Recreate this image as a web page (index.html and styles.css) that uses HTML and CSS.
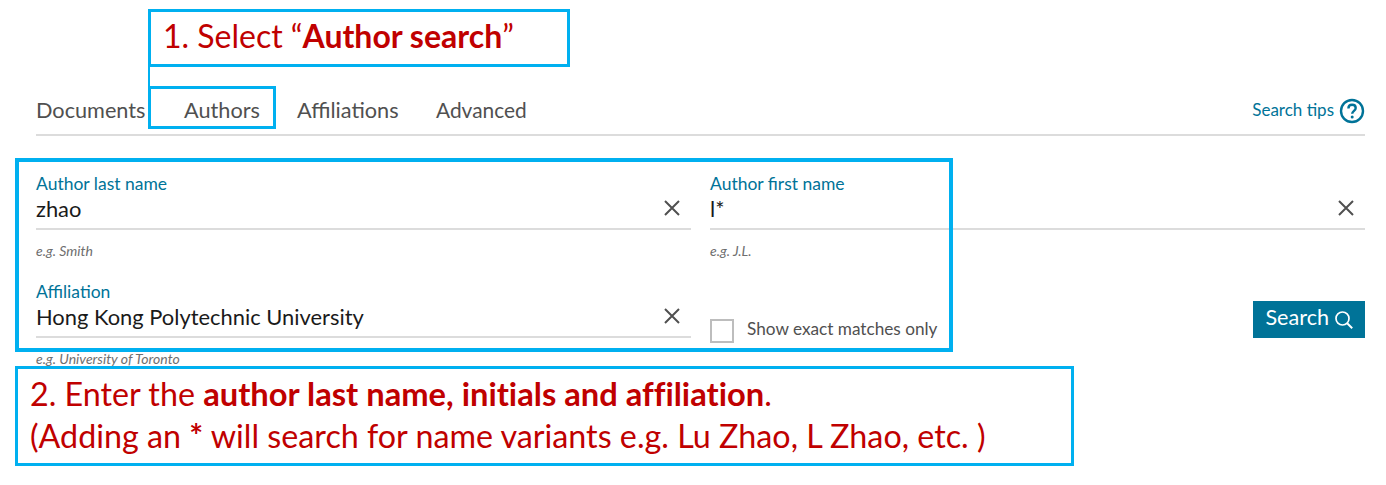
FILE: index.html
```html
<!DOCTYPE html>
<html lang="en">
<head>
  <meta charset="UTF-8" />
  <title>Author search</title>
  <link rel="stylesheet" href="styles.css">
</head>
<body>

<div class="page">
  <div class="tabs">
    <a class="tab tab-documents">Documents</a>
    <a class="tab tab-authors">Authors</a>
    <a class="tab tab-affiliations">Affiliations</a>
    <a class="tab tab-advanced">Advanced</a>
    <a class="tips">Search tips
      <svg class="tips-icon" width="26" height="26" viewBox="0 0 26 26">
        <circle cx="13" cy="13" r="11" fill="none" stroke="#007398" stroke-width="2.4" />
        <path d="M9.4 10.4c0-2.2 1.6-3.6 3.7-3.6s3.6 1.3 3.6 3.2c0 2.8-3.5 2.9-3.5 5.8" fill="none" stroke="#007398" stroke-width="2.4" />
        <circle cx="13.2" cy="19" r="1.5" fill="#007398" />
      </svg>
    </a>
  </div>

  <div class="form">
    <div class="field">
      <label>Author last name</label>
      <div class="value">zhao <svg class="clear" width="18" height="18" viewBox="0 0 18 18"><path d="M2 2l14 14M16 2L2 16" stroke="#505050" stroke-width="2" /></svg></div>
      <div class="hint">e.g. Smith</div>
    </div>
    <div class="field">
      <label>Author first name</label>
      <div class="value">l* <svg class="clear" width="18" height="18" viewBox="0 0 18 18"><path d="M2 2l14 14M16 2L2 16" stroke="#505050" stroke-width="2" /></svg></div>
      <div class="hint">e.g. J.L.</div>
    </div>
    <div class="field">
      <label>Affiliation</label>
      <div class="value">Hong Kong Polytechnic University <svg class="clear" width="18" height="18" viewBox="0 0 18 18"><path d="M2 2l14 14M16 2L2 16" stroke="#505050" stroke-width="2" /></svg></div>
      <div class="hint">e.g. University of Toronto</div>
    </div>
    <div class="options">
      <label class="exact"><span class="checkbox"></span><span class="exact-text">Show exact matches only</span></label>
      <button class="search-btn">Search
        <svg width="20" height="20" viewBox="0 0 20 20"><circle cx="8.5" cy="8.5" r="6.5" fill="none" stroke="#fff" stroke-width="1.7" /><path d="M13.2 13.2l5 5" stroke="#fff" stroke-width="2" /></svg>
      </button>
    </div>
  </div>
</div>

<!-- annotations drawn over the screenshot -->
<div class="note note-select">1. Select “<strong>Author search</strong>”</div>
<div class="note-link"></div>
<div class="note-tab"></div>
<div class="note-form"></div>
<div class="note note-enter">
  2. Enter the <strong>author last name, initials and affiliation</strong>.<br>
  (Adding an <strong>*</strong> will search for name variants e.g. Lu Zhao, L Zhao, etc. )
</div>

</body>
</html>
```

FILE: styles.css
```css
body {
  font-family: Lato, "Open Sans", sans-serif;
  background-color: white;
  margin: 0;
  padding: 0;
  height: 485px;
  overflow: hidden;
}

.page {
  padding: 95px 21px 0 36px;
}

.tabs {
  display: flex;
  align-items: center;
  height: 29px;
  padding-bottom: 10px;
  border-bottom: 2px solid #dcdcdc;
  font-size: 21.7px;
  color: #505050;
}

.tab-documents {
  width: 148px;
}

.tab-authors {
  width: 113px;
}

.tab-affiliations {
  width: 139px;
}

.tab-advanced {
  font-size: 20.9px;
}

.tips {
  display: flex;
  align-items: center;
  gap: 5px;
  margin-left: auto;
  font-size: 17px;
  color: #007398;
}

.tips-icon {
  margin-top: 3px;
}

.form {
  display: grid;
  grid-template-columns: 655px 655px;
  column-gap: 19px;
  padding-top: 38px;
}

.field {
  height: 108px;
}

.field label {
  display: block;
  font-size: 17.5px;
  line-height: 20px;
  color: #007398;
}

.value {
  display: flex;
  justify-content: space-between;
  align-items: center;
  height: 36px;
  box-sizing: border-box;
  padding: 0 10px 6px 0;
  border-bottom: 2px solid #dcdcdc;
  font-size: 21.9px;
  color: #1a1a1a;
}

.hint {
  margin-top: 12px;
  font-size: 14px;
  font-style: italic;
  color: #6e6e6e;
}

.options {
  display: flex;
  justify-content: space-between;
  align-items: flex-end;
  height: 61px;
}

.exact {
  display: flex;
  align-items: flex-end;
  gap: 13px;
  font-size: 17.2px;
  color: #505050;
}

.exact-text {
  line-height: 20px;
  padding-bottom: 4px;
}

.checkbox {
  width: 20px;
  height: 20px;
  border: 2px solid #bdbdbd;
}

.search-btn {
  display: flex;
  align-items: center;
  gap: 5px;
  height: 37px;
  margin-bottom: 5px;
  padding: 0 11px 5px 12px;
  border: none;
  background: #007398;
  color: white;
  font-family: inherit;
  font-size: 21.6px;
}

.search-btn svg {
  margin-top: 5px;
}

.note {
  position: absolute;
  box-sizing: border-box;
  border: 3px solid #00b0f0;
  color: #c00000;
  background: white;
  font-variant-ligatures: none;
}

.note-select {
  left: 148px;
  top: 9px;
  width: 422px;
  height: 58px;
  padding: 5px 0 0 12px;
  font-size: 32px;
  line-height: 38px;
}

.note-enter {
  left: 15px;
  top: 366px;
  width: 1059px;
  height: 100px;
  padding: 4px 0 0 12px;
  font-size: 32.25px;
  line-height: 42px;
}

.note-enter strong {
  font-size: 32.7px;
}

.note-link {
  position: absolute;
  left: 148px;
  top: 66px;
  width: 2px;
  height: 22px;
  background: #00b0f0;
}

.note-tab {
  position: absolute;
  left: 148px;
  top: 86px;
  width: 128px;
  height: 43px;
  box-sizing: border-box;
  border: 3px solid #00b0f0;
}

.note-form {
  position: absolute;
  left: 15px;
  top: 158px;
  width: 938px;
  height: 194px;
  box-sizing: border-box;
  border: 4px solid #00b0f0;
}
```
